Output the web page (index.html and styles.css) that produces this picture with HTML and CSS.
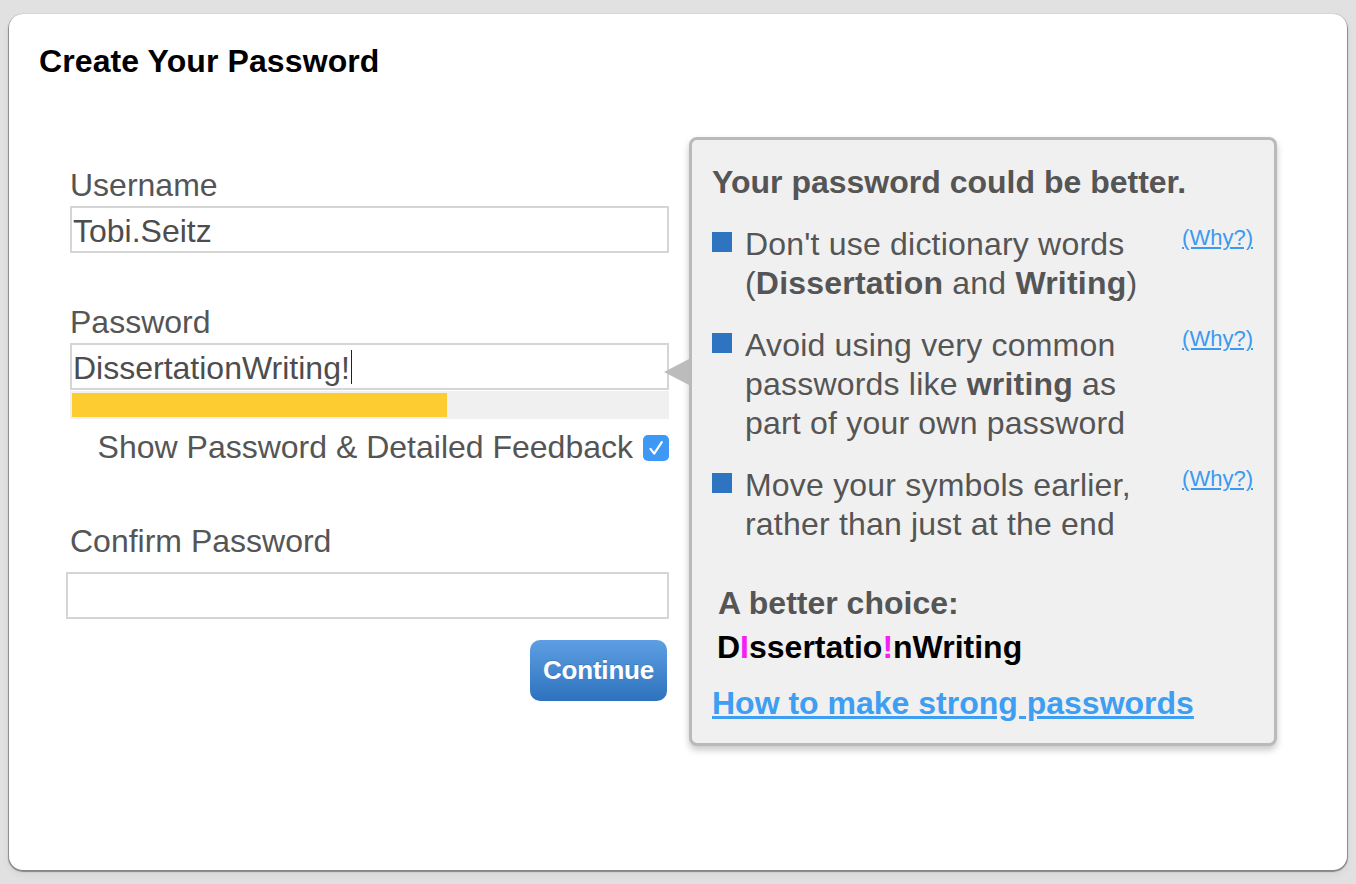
FILE: index.html
```html
<!DOCTYPE html>
<html lang="en">
<head>
<meta charset="utf-8">
<title>Create Your Password</title>
<link rel="stylesheet" href="styles.css">
</head>
<body>
<div class="card">
  <h1 class="title">Create Your Password</h1>
  <div class="row">
    <div class="form">
      <div class="label">Username</div>
      <div class="field"><span>Tobi.Seitz</span></div>

      <div class="label label-pw">Password</div>
      <div class="field"><span>DissertationWriting!</span><span class="caret"></span></div>
      <div class="meter"><div class="meter-fill" style="width:63%"></div></div>
      <div class="show">
        <span>Show Password &amp; Detailed Feedback</span>
        <span class="check"><svg width="26" height="26" viewBox="0 0 26 26"><path d="M7.5 13.8 L11.2 18.6 L18.8 7.2" fill="none" stroke="#fff" stroke-width="2.2" stroke-linecap="round" stroke-linejoin="round"/></svg></span>
      </div>

      <div class="label label-confirm">Confirm Password</div>
      <div class="field field-confirm"></div>

      <div class="actions"><button class="btn" type="button">Continue</button></div>
    </div>

    <div class="pop">
      <span class="arrow"></span>
      <h2 class="pop-title">Your password could be better.</h2>
      <ul class="tips">
        <li class="tip"><span class="sq"></span><span class="tip-text">Don't use dictionary words (<b>Dissertation</b> and <b>Writing</b>)</span><a class="why" href="#">(Why?)</a></li>
        <li class="tip"><span class="sq"></span><span class="tip-text">Avoid using very common passwords like <b>writing</b> as part of your own password</span><a class="why" href="#">(Why?)</a></li>
        <li class="tip"><span class="sq"></span><span class="tip-text">Move your symbols earlier, rather than just at the end</span><a class="why" href="#">(Why?)</a></li>
      </ul>
      <div class="better-h">A better choice:</div>
      <div class="better">D<span class="hl">I</span>ssertatio<span class="hl">!</span>nWriting</div>
      <a class="howto" href="#">How to make strong passwords</a>
    </div>
  </div>
</div>
</body>
</html>
```

FILE: styles.css
```css
* { box-sizing: border-box; }

html, body {
  margin: 0;
  height: 100%;
}

body {
  background: #e1e1e1;
  padding: 14px 9px;
  font-family: "Liberation Sans", Arial, Helvetica, sans-serif;
  color: #555;
}

.card {
  height: 856px;
  background: #fff;
  border-radius: 14px;
  box-shadow: 0 1px 1px 1px rgba(0, 0, 0, 0.38), 0 4px 8px rgba(0, 0, 0, 0.06);
  padding: 28px 30px 0 30px;
}

.title {
  margin: 0;
  font-size: 32px;
  line-height: 38px;
  font-weight: bold;
  color: #000;
  letter-spacing: 0.1px;
}

.row {
  display: flex;
  align-items: flex-start;
  margin-top: 57px;
  gap: 20px;
}

.form {
  width: 599px;
  margin-left: 31px;
  padding-top: 29px;
  display: flex;
  flex-direction: column;
}

.label {
  font-size: 32px;
  line-height: 38px;
  margin-bottom: 2px;
}

.label-pw { margin-top: 50px; }

.label-confirm {
  margin-top: 56px;
  margin-bottom: 12px;
}

.field {
  height: 47px;
  border: 2px solid #d5d5d5;
  background: #fff;
  display: flex;
  align-items: center;
  padding: 3px 0 0 1px;
  font-size: 32px;
  line-height: 38px;
  color: #4d4d4d;
}

.caret {
  display: inline-block;
  width: 0;
  height: 34px;
  border-left: 1.5px solid #222;
  margin-left: 1px;
  margin-top: -3px;
}

.field-confirm {
  margin-left: -4px;
}

.meter {
  margin-top: 1px;
  height: 28px;
  background: #f0f0f0;
  padding: 2px;
}

.meter-fill {
  height: 100%;
  background: #fdcc30;
}

.show {
  margin-top: 9px;
  display: flex;
  justify-content: flex-end;
  align-items: center;
  gap: 10px;
  font-size: 32px;
  line-height: 38px;
}

.check {
  width: 26px;
  height: 26px;
  border-radius: 5px;
  background: #3d98f6;
  display: flex;
  margin-top: 1px;
}

.actions {
  display: flex;
  justify-content: flex-end;
  margin-top: 21px;
  margin-right: 2px;
}

.btn {
  width: 137px;
  height: 61px;
  border: none;
  border-radius: 10px;
  background: linear-gradient(#5d9fe2, #2e72be);
  color: #fff;
  font-family: "Liberation Sans", Arial, Helvetica, sans-serif;
  font-size: 26px;
  font-weight: bold;
  letter-spacing: -0.2px;
  padding: 0;
  text-shadow: 0 -1px 0 rgba(0, 0, 0, 0.15);
}

.pop {
  position: relative;
  width: 588px;
  background: #f0f0f0;
  border: 3px solid #bababa;
  border-radius: 8px;
  box-shadow: 0 4px 7px rgba(0, 0, 0, 0.22);
  padding: 23px 21px 21px 20px;
}

.arrow {
  position: absolute;
  left: -28px;
  top: 219px;
  width: 0;
  height: 0;
  border-right: 25px solid #bcbcbc;
  border-top: 13px solid transparent;
  border-bottom: 13px solid transparent;
}

.pop-title {
  margin: 0;
  font-size: 32px;
  line-height: 38px;
  font-weight: bold;
  letter-spacing: 0;
  color: #555;
}

.tips {
  list-style: none;
  margin: 24px 0 0 0;
  padding: 0;
  display: flex;
  flex-direction: column;
  gap: 23px;
}

.tip {
  display: flex;
  align-items: flex-start;
  font-size: 32px;
  line-height: 39px;
}

.sq {
  flex: none;
  width: 20px;
  height: 20px;
  background: #2f74c0;
  margin-top: 7px;
  margin-right: 13px;
}

.tip-text {
  flex: 1;
  max-width: 405px;
  letter-spacing: 0.2px;
}

.tip-text b { color: #555; }

.why {
  flex: none;
  margin-left: auto;
  margin-top: 0;
  font-size: 22px;
  line-height: 26px;
  color: #3b9af0;
  text-decoration: underline;
}

.better-h {
  margin-top: 40px;
  padding-left: 6px;
  font-size: 32px;
  line-height: 38px;
  font-weight: bold;
  color: #555;
}

.better {
  margin-top: 6px;
  padding-left: 5px;
  font-size: 32px;
  line-height: 38px;
  font-weight: bold;
  color: #000;
}

.hl { color: #f51ff5; }

.howto {
  display: inline-block;
  margin-top: 18px;
  font-size: 32px;
  line-height: 38px;
  font-weight: bold;
  color: #3d9ef2;
  text-decoration: underline;
}
```
